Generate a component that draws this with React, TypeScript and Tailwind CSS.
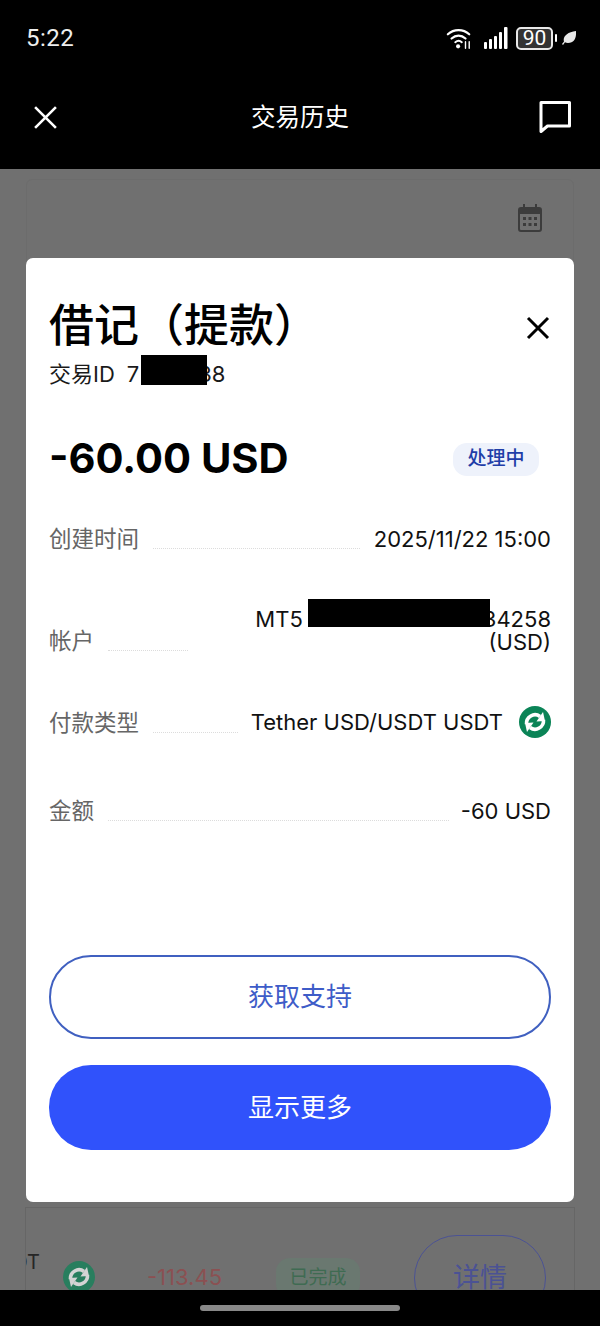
const latin = "font-['Inter','Noto_Sans_CJK_SC',sans-serif]";

function TetherIcon({ className }: { className: string }) {
  return (
    <svg viewBox="0 0 32 32" className={className}>
      <circle cx="16" cy="16" r="16" fill="#0b8457" />
      <g fill="none" stroke="#fff" strokeWidth="3.600">
        <path d="M7.500 18C7 11 15 6 21 10.500" />
        <path d="M24.500 14C25 21 17 26 11 21.500" />
      </g>
      <path d="M17.500 15.500L26 15l-2-9z" fill="#fff" />
      <path d="M14.500 16.500L6 17l2 9z" fill="#fff" />
    </svg>
  );
}

function StatusIcons() {
  return (
    <div className="flex items-center">
      <svg viewBox="0 0 28 24" className="w-[26px] h-[24px]" fill="none" stroke="#fff" strokeLinecap="round">
        <path d="M2 8c6.500-6 16.500-6 23 0" strokeWidth="2.400" />
        <path d="M6 12.500c4.500-4 10.500-4 15 0" strokeWidth="2.400" />
        <path d="M10 16.500c2.200-1.800 5-1.800 7 0" strokeWidth="2.200" />
        <circle cx="13" cy="21" r="2.200" fill="#fff" stroke="none" />
        <path d="M21 16v7M25 16v7" strokeWidth="1.500" />
      </svg>
      <svg viewBox="0 0 24 22" className="w-[24px] h-[22px] ml-[12px]" fill="#fff">
        <rect x="0" y="15" width="3" height="7" rx="1" />
        <rect x="5" y="12" width="3" height="10" rx="1" />
        <rect x="10" y="9" width="3" height="13" rx="1" />
        <rect x="15" y="5" width="3" height="17" rx="1" />
        <rect x="20" y="0" width="3.500" height="22" rx="1" />
      </svg>
      <div className="ml-[8px] w-[37px] h-[23px] rounded-[5px] border-2 border-[#e8e8e8] bg-[#333333] flex items-center justify-center text-[21px] leading-none text-white font-['Roboto',sans-serif]">
        90
      </div>
      <div className="ml-[2px] w-[2px] h-[8px] bg-white rounded-sm" />
      <svg viewBox="0 0 14 14" className="w-[14px] h-[14px] ml-[5px]" fill="#e8e8e8">
        <path d="M14 0c.4 6-1 12-8 12-1.300 0-2.300-.3-3-.8L1 14l-1-1 2-2.500C.5 6 5 1 14 0z" />
      </svg>
    </div>
  );
}

function DetailRow({ label, line, children }: { label: string; line: string; children: React.ReactNode }) {
  return (
    <div className="flex items-end">
      <span className="text-[22.500px] leading-[30px] text-[#666666] shrink-0">{label}</span>
      <div className={`${line} mb-[5px] ml-[14px] border-b border-dotted border-[#dcdcdc]`} />
      {children}
    </div>
  );
}

export default function App() {
  return (
    <div className={`${latin} w-[600px] h-[1326px] flex flex-col bg-[#707070] overflow-hidden`}>
      <header className="h-[169px] bg-black shrink-0 text-white">
        <div className="flex items-center justify-between pl-[26px] pr-[24px] pt-[24px] h-[52px]">
          <span className="text-[24px] leading-[28px] font-['Roboto',sans-serif] tracking-[0.5px] text-[#eeeeee]">5:22</span>
          <StatusIcons />
        </div>
        <div className="flex items-center justify-between pl-[33px] pr-[28px] mt-[48px]">
          <svg viewBox="0 0 24 24" className="w-[25px] h-[25px]" fill="none" stroke="#fff" strokeWidth="2.500">
            <path d="M2 2l20 20M22 2L2 22" />
          </svg>
          <span className="ml-[4px] text-[24.500px] leading-[32px]">交易历史</span>
          <svg viewBox="0 0 34 34" className="w-[34px] h-[34px]" fill="none" stroke="#fff" strokeWidth="3">
            <path d="M3 2.500h28.500v23.500H9.500L3 31.500z" strokeLinejoin="round" />
          </svg>
        </div>
      </header>

      <main className="relative flex-1 overflow-hidden px-[26px]">
        <div className="mt-[10px] h-[1000px] rounded-md border border-[#6c6c6c] flex justify-end pr-[31px] pt-[24px]">
          <svg viewBox="0 0 24 28" className="w-[24px] h-[28px]" fill="#3c3c3c">
            <path d="M5 0h2v3h10V0h2v3h2a3 3 0 0 1 3 3v19a3 3 0 0 1-3 3H3a3 3 0 0 1-3-3V6a3 3 0 0 1 3-3h2zM2 10v15a1 1 0 0 0 1 1h18a1 1 0 0 0 1-1V10z" />
            <path d="M5 13h3v3H5zM10.500 13h3v3h-3zM16 13h3v3h-3zM5 19h3v3H5zM10.500 19h3v3h-3zM16 19h3v3h-3z" />
          </svg>
        </div>

        <div className="mt-[28px] h-[200px] -mx-px border border-[#666666] flex items-start relative">
          <span className="mt-[41px] ml-[0px] w-[14px] overflow-hidden text-[20px] leading-[26px] text-[#262626] flex justify-end shrink-0">DT</span>
          <TetherIcon className="ml-[23px] mt-[53px] w-[32px] h-[32px] opacity-70 shrink-0" />
          <span className="ml-[52px] mt-[54px] text-[22px] leading-[30px] text-[#8b5052]">-113.45</span>
          <span className="ml-[54px] mt-[50px] h-[40px] w-[84px] rounded-[14px] bg-[#6a7870] flex items-center justify-center text-[19px] text-[#3f6b52]">已完成</span>
          <span className="ml-[54px] mt-[27px] h-[86px] w-[132px] rounded-[43px] border-[1.5px] border-[#4b5294] flex items-center justify-center text-[27px] text-[#4b5294]">详情</span>
        </div>

        <section className="absolute left-[26px] top-[89px] w-[548px] h-[944px] bg-white rounded-[7px] flex flex-col pl-[23px] pr-[23px] pb-[52px] pt-[43px]">
          <div className="flex items-center justify-between h-[50px]">
            <h1 className="text-[45px] leading-[50px] font-medium text-black">借记（提款）</h1>
            <svg viewBox="0 0 24 24" className="w-[24px] h-[24px] mt-[4px] mr-[1px]" fill="none" stroke="#000" strokeWidth="3">
              <path d="M2 2l20 20M22 2L2 22" />
            </svg>
          </div>
          <div className="mt-[8px] h-[30px] flex text-[22px] leading-[30px] text-[#1a1a1a] whitespace-nowrap">
            <span>交易ID</span>
            <span className="ml-[12px]">7</span>
            <div className="relative w-[66px] h-[30px] ml-[2px] -mt-[4px] -mr-[9px] bg-black shrink-0" />
            <span>38</span>
          </div>

          <div className="mt-[48px] flex items-center justify-between h-[44px]">
            <span className="text-[41.600px] leading-[42px] -mt-[2px] font-bold text-black">-60.00 USD</span>
            <span className="h-[33px] w-[86px] mr-[12px] rounded-[14px] bg-[#eef2fb] flex items-center justify-center text-[19px] font-medium text-[#1f3ea8]">处理中</span>
          </div>

          <div className="mt-[43px]">
            <DetailRow label="创建时间" line="flex-1">
              <span className="ml-[14px] text-[22px] leading-[30px] text-[#111111]">2025/11/22 15:00</span>
            </DetailRow>
          </div>

          <div className="mt-[54px]">
            <DetailRow label="帐户" line="w-[80px]">
              <div className="ml-auto mb-[2px] w-[348px] text-[22px] leading-[23px] text-[#111111]">
                <div className="flex justify-end whitespace-nowrap h-[23px]">
                  <span>MT5</span>
                  <div className="relative w-[182px] h-[28px] ml-[5px] -mt-[9px] -mr-[7px] bg-black shrink-0" />
                  <span>34258</span>
                </div>
                <div className="text-right">(USD)</div>
              </div>
            </DetailRow>
          </div>

          <div className="mt-[50px]">
            <DetailRow label="付款类型" line="w-[85px]">
              <div className="ml-auto flex items-center self-start text-[22px] leading-[30px] text-[#111111]">
                <span>Tether USD/USDT USDT</span>
                <TetherIcon className="ml-[16px] w-[32px] h-[32px]" />
              </div>
            </DetailRow>
          </div>

          <div className="mt-[57px]">
            <DetailRow label="金额" line="flex-1">
              <span className="ml-[12px] self-start pt-[1px] text-[22px] leading-[30px] text-[#111111]">-60 USD</span>
            </DetailRow>
          </div>

          <div className="mt-auto flex flex-col gap-[26px]">
            <button className="h-[84px] pb-[2px] rounded-[42px] border-2 border-[#4060c0] text-[26px] text-[#3e5cc8]">获取支持</button>
            <button className="h-[85px] rounded-[42px] bg-[#3052fb] text-[26px] text-white">显示更多</button>
          </div>
        </section>
      </main>

      <footer className="h-[36px] shrink-0 bg-black flex justify-center pt-[15px]">
        <div className="w-[200px] h-[6px] rounded-full bg-[#888888]" />
      </footer>
    </div>
  );
}
